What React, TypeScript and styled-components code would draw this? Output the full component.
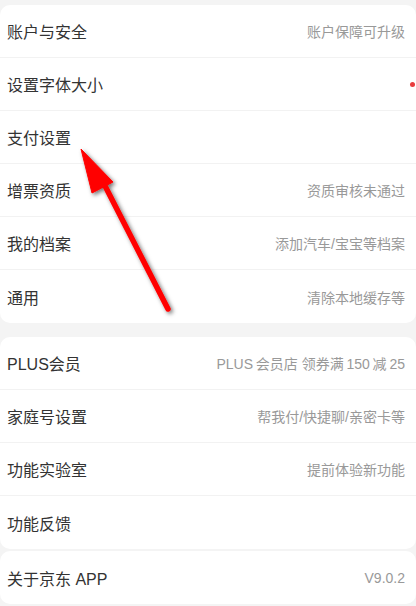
import React from "react";
import styled, { createGlobalStyle } from "styled-components";

type Item = { title: string; hint?: string; dot?: boolean };

const groups: Item[][] = [
  [
    { title: "账户与安全", hint: "账户保障可升级" },
    { title: "设置字体大小", dot: true },
    { title: "支付设置" },
    { title: "增票资质", hint: "资质审核未通过" },
    { title: "我的档案", hint: "添加汽车/宝宝等档案" },
    { title: "通用", hint: "清除本地缓存等" },
  ],
  [
    { title: "PLUS会员", hint: "PLUS\u2009会员店 领券满\u2009150\u2009减\u200925" },
    { title: "家庭号设置", hint: "帮我付/快捷聊/亲密卡等" },
    { title: "功能实验室", hint: "提前体验新功能" },
    { title: "功能反馈" },
  ],
  [{ title: "关于京东 APP", hint: "V9.0.2" }],
];

const gaps = [5, 14, 2];

const App = () => {
  return (
    <Page>
      <GlobalStyle />
      {groups.map((group, i) => (
        <Card key={i} $top={gaps[i]}>
          {group.map((item) => (
            <Row key={item.title}>
              <Title>{item.title}</Title>
              {item.hint && <Hint>{item.hint}</Hint>}
              {item.dot && <Dot />}
            </Row>
          ))}
        </Card>
      ))}
      <Arrow width="416" height="606" viewBox="0 0 416 606">
        <defs>
          <filter id="shade" x="-20%" y="-20%" width="140%" height="140%">
            <feDropShadow dx="2" dy="2" stdDeviation="2" floodColor="#000" floodOpacity="0.55" />
          </filter>
        </defs>
        <g filter="url(#shade)" fill="#ff0000" stroke="#ff0000">
          <line x1="102" y1="180" x2="168" y2="309" strokeWidth="5.5" strokeLinecap="round" />
          <polygon points="81,149 113,182 92,193" strokeWidth="1" strokeLinejoin="round" />
        </g>
      </Arrow>
    </Page>
  );
};

export default App;

const GlobalStyle = createGlobalStyle`
  html, body {
    margin: 0;
    padding: 0;
    background: #f4f4f4;
  }
  body {
    font-family: "Liberation Sans", "Noto Sans CJK SC", sans-serif;
  }
`;

const Page = styled.div`
  position: relative;
  width: 416px;
  height: 606px;
  overflow: hidden;
  background: #f4f4f4;
`;

const Card = styled.div<{ $top: number }>`
  margin-top: ${(p) => p.$top}px;
  background: #ffffff;
  border-radius: 10px;
  overflow: hidden;
`;

const Row = styled.div`
  height: 53px;
  box-sizing: border-box;
  display: flex;
  align-items: center;
  justify-content: space-between;
  padding: 0 11px 0 7px;
  border-bottom: 1px solid #f2f2f2;
  position: relative;

  &:last-child {
    border-bottom: none;
  }
`;

const Title = styled.span`
  font-size: 16px;
  color: #333333;
`;

const Hint = styled.span`
  font-size: 14px;
  color: #999999;
`;

const Dot = styled.span`
  position: absolute;
  right: 1px;
  top: 50%;
  width: 5px;
  height: 5px;
  margin-top: -2px;
  border-radius: 50%;
  background: #e93b3d;
`;

const Arrow = styled.svg`
  position: absolute;
  left: 0;
  top: 0;
  pointer-events: none;
`;
